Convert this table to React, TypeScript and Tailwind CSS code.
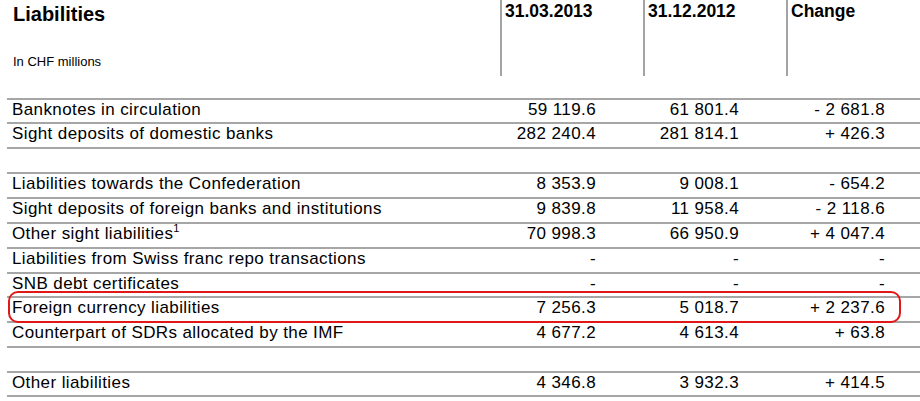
import React from "react";

type Row = { label?: React.ReactNode; a?: string; b?: string; c?: string; h: number };

const rows: Row[] = [
  { label: "Banknotes in circulation", a: "59 119.6", b: "61 801.4", c: "- 2 681.8", h: 24 },
  { label: "Sight deposits of domestic banks", a: "282 240.4", b: "281 814.1", c: "+ 426.3", h: 25 },
  { h: 25 },
  { label: "Liabilities towards the Confederation", a: "8 353.9", b: "9 008.1", c: "- 654.2", h: 25 },
  { label: "Sight deposits of foreign banks and institutions", a: "9 839.8", b: "11 958.4", c: "- 2 118.6", h: 25 },
  {
    label: (
      <>
        Other sight liabilities<sup className="text-[11px] -top-[7px]">1</sup>
      </>
    ),
    a: "70 998.3",
    b: "66 950.9",
    c: "+ 4 047.4",
    h: 25,
  },
  { label: "Liabilities from Swiss franc repo transactions", a: "-", b: "-", c: "-", h: 25 },
  { label: "SNB debt certificates", a: "-", b: "-", c: "-", h: 24 },
  { label: "Foreign currency liabilities", a: "7 256.3", b: "5 018.7", c: "+ 2 237.6", h: 25 },
  { label: "Counterpart of SDRs allocated by the IMF", a: "4 677.2", b: "4 613.4", c: "+ 63.8", h: 25 },
  { h: 25 },
  { label: "Other liabilities", a: "4 346.8", b: "3 932.3", c: "+ 414.5", h: 24 },
];

export default function App() {
  return (
    <div
      className="relative w-[920px] h-[401px] overflow-hidden bg-white text-black"
      style={{ fontFamily: '"Liberation Sans", Arial, sans-serif' }}
    >
      {/* Header */}
      <div className="flex h-[98px]">
        <div className="w-[500px] shrink-0 pl-[13px]">
          <div className="pt-[3px] text-[20px] leading-[23px] font-bold">Liabilities</div>
          <div className="mt-[28px] text-[13px] leading-[15px]">In CHF millions</div>
        </div>
        {["31.03.2013", "31.12.2012", "Change"].map((t) => (
          <div
            key={t}
            className="w-[143px] shrink-0 h-[76px] border-l-2 border-[#a3a3a3] pl-[3px] pt-[1px] text-[17.5px] leading-[20px] font-bold"
          >
            {t}
          </div>
        ))}
      </div>

      {/* Body */}
      <div className="ml-[7px] w-[913px]">
        {rows.map((r, i) => (
          <div
            key={i}
            className="flex items-start border-t-2 border-[#a6a6a6] text-[17px] leading-[19px] tracking-[0.4px]"
            style={{ height: r.h }}
          >
            <div className="w-[493px] shrink-0 pl-[5px] whitespace-nowrap">{r.label}</div>
            <div className="w-[143px] shrink-0 pr-[47px] text-right">{r.a}</div>
            <div className="w-[143px] shrink-0 pr-[47px] text-right">{r.b}</div>
            <div className="flex-1 pr-[35px] text-right">{r.c}</div>
          </div>
        ))}
        <div className="border-t-2 border-[#a6a6a6]" />
      </div>

      {/* Red highlight */}
      <div className="absolute left-[8px] top-[291px] w-[893px] h-[32px] border-2 border-[#e01818] rounded-[10px]" />
    </div>
  );
}
